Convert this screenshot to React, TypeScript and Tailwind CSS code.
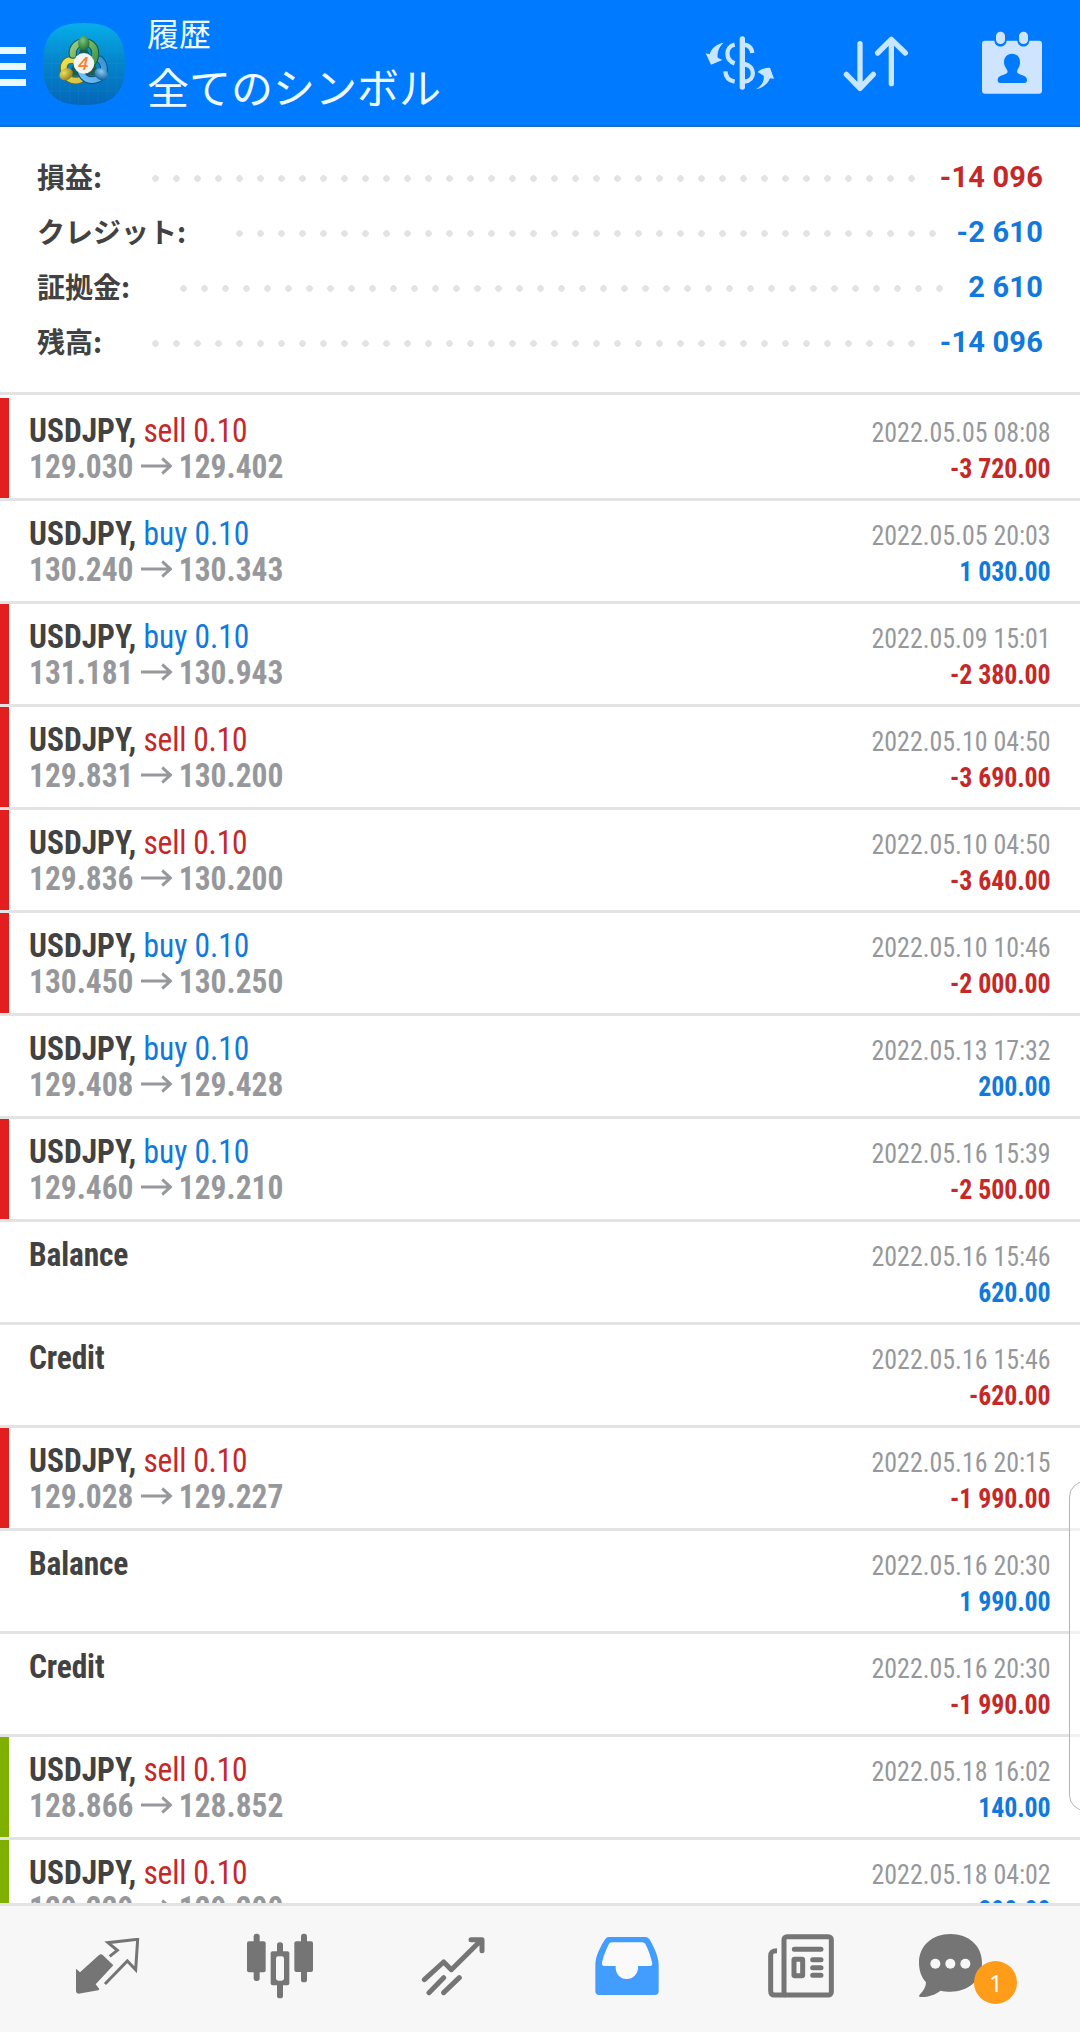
import React from "react";

type Row = {
  side?: "sell" | "buy";
  label?: string;
  from?: string;
  to?: string;
  time: string;
  profit: string;
  bar?: "red" | "green";
};

const rows: Row[] = [
  { side: "sell", from: "129.030", to: "129.402", time: "2022.05.05 08:08", profit: "-3 720.00", bar: "red" },
  { side: "buy", from: "130.240", to: "130.343", time: "2022.05.05 20:03", profit: "1 030.00" },
  { side: "buy", from: "131.181", to: "130.943", time: "2022.05.09 15:01", profit: "-2 380.00", bar: "red" },
  { side: "sell", from: "129.831", to: "130.200", time: "2022.05.10 04:50", profit: "-3 690.00", bar: "red" },
  { side: "sell", from: "129.836", to: "130.200", time: "2022.05.10 04:50", profit: "-3 640.00", bar: "red" },
  { side: "buy", from: "130.450", to: "130.250", time: "2022.05.10 10:46", profit: "-2 000.00", bar: "red" },
  { side: "buy", from: "129.408", to: "129.428", time: "2022.05.13 17:32", profit: "200.00" },
  { side: "buy", from: "129.460", to: "129.210", time: "2022.05.16 15:39", profit: "-2 500.00", bar: "red" },
  { label: "Balance", time: "2022.05.16 15:46", profit: "620.00" },
  { label: "Credit", time: "2022.05.16 15:46", profit: "-620.00" },
  { side: "sell", from: "129.028", to: "129.227", time: "2022.05.16 20:15", profit: "-1 990.00", bar: "red" },
  { label: "Balance", time: "2022.05.16 20:30", profit: "1 990.00" },
  { label: "Credit", time: "2022.05.16 20:30", profit: "-1 990.00" },
  { side: "sell", from: "128.866", to: "128.852", time: "2022.05.18 16:02", profit: "140.00", bar: "green" },
  { side: "sell", from: "129.229", to: "129.200", time: "2022.05.18 04:02", profit: "290.00", bar: "green" },
];

const summary = [
  { label: "損益:", value: "-14 096", color: "text-[#c62828]", dots: "left-[108px] w-[777px]" },
  { label: "クレジット:", value: "-2 610", color: "text-[#1279dc]", dots: "left-[192px] w-[714px]" },
  { label: "証拠金:", value: "2 610", color: "text-[#1279dc]", dots: "left-[136px] w-[777px]" },
  { label: "残高:", value: "-14 096", color: "text-[#1279dc]", dots: "left-[108px] w-[777px]" },
];

function Logo() {
  return (
    <svg className="ml-[17px] mt-[3px] h-[82px] w-[82px]" viewBox="130 69 245 245">
      <defs>
        <linearGradient id="sky" x1="0" y1="0" x2="0" y2="1">
          <stop offset="0" stopColor="#06aeea" />
          <stop offset="0.45" stopColor="#0587cc" />
          <stop offset="1" stopColor="#0466b8" />
        </linearGradient>
        <linearGradient id="green" gradientUnits="userSpaceOnUse" x1="210" y1="120" x2="290" y2="200">
          <stop offset="0" stopColor="#a5d488" />
          <stop offset="1" stopColor="#2f8f45" />
        </linearGradient>
        <linearGradient id="yellow" gradientUnits="userSpaceOnUse" x1="185" y1="165" x2="240" y2="250">
          <stop offset="0" stopColor="#f1e45a" />
          <stop offset="1" stopColor="#d8c43c" />
        </linearGradient>
        <linearGradient id="blue" gradientUnits="userSpaceOnUse" x1="320" y1="180" x2="240" y2="250">
          <stop offset="0" stopColor="#3690d2" />
          <stop offset="1" stopColor="#7acaf5" />
        </linearGradient>
        <radialGradient id="gHead" cx="0.4" cy="0.3" r="0.7">
          <stop offset="0" stopColor="#7cc67c" />
          <stop offset="1" stopColor="#1f6d33" />
        </radialGradient>
        <radialGradient id="yHead" cx="0.4" cy="0.3" r="0.7">
          <stop offset="0" stopColor="#ecdf60" />
          <stop offset="1" stopColor="#94801c" />
        </radialGradient>
        <radialGradient id="bHead" cx="0.4" cy="0.3" r="0.7">
          <stop offset="0" stopColor="#86cdf5" />
          <stop offset="1" stopColor="#17619e" />
        </radialGradient>
      </defs>
      <path
        d="M252 69C340 69 375 104 375 191.500S340 314 252 314S130 279 130 191.500S164 69 252 69Z"
        fill="url(#sky)"
      />
      <path d="M155 95V290M182 78V305M209 72V312M236 70V313M265 70V313M294 72V312M322 78V305M349 95V290M140 117H364M133 153H371M131 190H374M133 232H371M140 272H364" stroke="#35b0e8" strokeOpacity="0.16" strokeWidth="2" fill="none" />
      <path d="M252 128L205 225H300Z" fill="#1c5f50" />
      <g fill="none" strokeLinecap="round">
        <path d="M218 180C200 178 190 190 192 208C194 232 218 248 242 238" stroke="#5c6a24" strokeWidth="23" />
        <path d="M218 180C200 178 190 190 192 208C194 232 218 248 242 238" stroke="url(#yellow)" strokeWidth="17" />
        <path d="M300 178C318 196 318 230 288 238C264 244 250 232 244 218" stroke="#0c4f87" strokeWidth="23" />
        <path d="M300 178C318 196 318 230 288 238C264 244 250 232 244 218" stroke="url(#blue)" strokeWidth="17" />
        <path d="M219 164C213 118 286 112 286 160C286 178 280 186 272 194" stroke="#1b5b3c" strokeWidth="24" />
        <path d="M219 164C213 118 286 112 286 160C286 178 280 186 272 194" stroke="url(#green)" strokeWidth="18" />
      </g>
      <ellipse cx="252" cy="130" rx="17" ry="22" fill="url(#gHead)" />
      <ellipse cx="199" cy="222" rx="21" ry="17" fill="url(#yHead)" transform="rotate(-30 199 222)" />
      <ellipse cx="304" cy="222" rx="21" ry="17" fill="url(#bHead)" transform="rotate(30 304 222)" />
      <circle cx="252" cy="190" r="31" fill="#f4f4f2" />
      <text x="250" y="209" textAnchor="middle" fontFamily="Open Sans, sans-serif" fontSize="54" fontWeight="600" fontStyle="italic" fill="#f58233">4</text>
    </svg>
  );
}

function CurrencyIcon() {
  return (
    <svg className="h-[54px] w-[70px]" viewBox="76 106 210 162" fill="none">
      <g stroke="#c8e6ff" strokeWidth="13">
        <path d="M188 115V259" strokeWidth="16" strokeLinecap="round" />
        <path d="M165 132C136 138 136 178 165 188" />
        <path d="M137 212C138 230 148 240 165 243" />
        <path d="M194 132C208 134 216 142 218 157" />
        <path d="M194 190C228 196 228 240 194 243" />
      </g>
      <path d="M132 126C112 129 94 143 90 161L78 158L94 192L128 178L114 171C112 155 118 138 132 126Z" fill="#c8e6ff" />
      <path d="M229 266C247 254 254 242 252 225L234 214C246 203 260 201 271 201L283 234L271 233C266 249 249 262 229 266Z" fill="#c8e6ff" />
    </svg>
  );
}

function SortIcon() {
  return (
    <svg className="h-[56px] w-[66px]" viewBox="490 107 198 168" fill="none" stroke="#c8e6ff" strokeWidth="16" strokeLinecap="round" strokeLinejoin="round">
      <path d="M541 130V264M500 222L541 264L581 222" />
      <path d="M635 250V117M594 158L635 117L677 158" />
    </svg>
  );
}

function CalendarIcon() {
  return (
    <svg className="h-[64px] w-[62px]" viewBox="903 94 186 192">
      <path d="M915 123H943C945 146 978 146 980 123H1012C1014 146 1047 146 1048 123H1077Q1086 123 1086 132V273Q1086 282 1077 282H915Q906 282 906 273V132Q906 123 915 123Z" fill="#cfe4ff" />
      <rect x="948" y="96" width="27" height="37" rx="13" fill="#cfe4ff" />
      <rect x="1017" y="96" width="27" height="37" rx="13" fill="#cfe4ff" />
      <path d="M996 162C1012 162 1021 174 1020 190C1019 203 1012 207 1011 218C1016 228 1040 224 1041 241Q1041 250 1033 250H961Q953 250 953 241C954 224 977 228 983 218C983 207 973 203 972 190C971 174 980 162 996 162Z" fill="#007aff" />
    </svg>
  );
}

function TradeIcon() {
  return (
    <svg className="h-[56px] w-[65px]" viewBox="226 298 195 168">
      <path d="M229 390L241 401L299 348Q305 345 310 350L341 380L288 437L299 451L296 455L236 465Q229 464 229 458Z" fill="#757575" />
      <path d="M330 353L353 335L325 312L414 302L408 393L383 367L316 436" fill="none" stroke="#757575" strokeWidth="9" />
    </svg>
  );
}

function CandlesIcon() {
  return (
    <svg className="h-[66px] w-[68px]" viewBox="738 281 204 198" fill="#757575">
      <rect x="761" y="283" width="18" height="142" rx="8" />
      <rect x="741" y="306" width="56" height="93" rx="6" />
      <rect x="903" y="283" width="18" height="146" rx="8" />
      <rect x="883" y="306" width="56" height="92" rx="6" />
      <rect x="831" y="309" width="18" height="168" rx="8" />
      <rect x="812" y="336" width="56" height="102" rx="6" />
      <rect x="828" y="351" width="24" height="73" rx="7" fill="#f7f7f7" />
    </svg>
  );
}

function TrendIcon() {
  return (
    <svg className="h-[60px] w-[66px]" viewBox="183 288 198 180" fill="none" stroke="#757575" strokeWidth="15" strokeLinecap="round" strokeLinejoin="round">
      <path d="M193 419L251 366L274 389L364 300M333 299H366V332" />
      <path d="M207 458L251 413M251 458L298 413" />
    </svg>
  );
}

function InboxIcon() {
  return (
    <svg className="h-[60px] w-[66px]" viewBox="702 288 198 180">
      <path d="M748 291H855C864 291 868 296 872 304C885 328 896 352 896 376V453Q896 465 884 465H718Q706 465 706 453V376C706 352 717 328 732 303C736 296 740 291 748 291Z" fill="#429dff" />
      <path d="M757 307C751 307 748 309 745 315C738 329 730 350 726 367C725 375 727 378 733 378H767V384C768 402 780 417 800 417S833 402 834 384V378H870C876 378 878 375 876 367C872 350 866 332 858 316C855 309 851 307 846 307Z" fill="#fafafa" />
    </svg>
  );
}

function NewsIcon() {
  return (
    <svg className="h-[66px] w-[68px]" viewBox="143 279 204 198" fill="none" stroke="#757575" strokeWidth="15">
      <rect x="194" y="290" width="142" height="175" rx="9" />
      <path d="M173 332C159 332 154 336 154 348V452Q154 465 166 465H200" />
      <path d="M225 328H305M280 359H305M280 383H305M280 406H305" strokeLinecap="round" />
      <rect x="224" y="358" width="26" height="49" rx="2" />
    </svg>
  );
}

function ChatIcon() {
  return (
    <svg className="h-[66px] w-[66px]" viewBox="596 280 198 198">
      <path d="M693 283C748 283 788 318 788 369S748 456 693 456C682 456 673 455 664 453C648 465 627 473 602 472C598 471 599 467 602 464C613 453 620 441 620 428C606 412 599 392 599 369C599 318 639 283 693 283Z" fill="#757575" />
      <circle cx="648" cy="372" r="15" fill="#f7f7f7" />
      <circle cx="693" cy="372" r="15" fill="#f7f7f7" />
      <circle cx="738" cy="372" r="15" fill="#f7f7f7" />
    </svg>
  );
}

function Arrow() {
  return (
    <svg className="ml-[8px] mr-[7px] h-[18px] w-[34px]" viewBox="0 0 34 18" fill="none" stroke="#96989b" strokeWidth="3">
      <path d="M0 9H32M23 1.500L32 9L23 16.500" />
    </svg>
  );
}

function HistoryRow({ row }: { row: Row }) {
  const barColor = row.bar === "red" ? "bg-[#e31e1e]" : row.bar === "green" ? "bg-[#7fb000]" : "bg-transparent";
  return (
    <div className="flex h-[103px] shrink-0 border-b-[3px] border-[#e3e3e3]">
      <div className={`w-[8.5px] shrink-0 ${barColor}`} />
      <div className="flex flex-1 justify-between pl-[20.5px] pr-[29px] pt-[14px]">
        <div className="origin-left scale-x-[0.925] text-[34px] leading-[36px]">
          <div className="flex h-9 whitespace-pre font-bold text-[#424242]">
            {row.label ? (
              <span className="tracking-[-0.15px]">{row.label}</span>
            ) : (
              <>
                <span>USDJPY, </span>
                <span className={row.side === "sell" ? "font-normal tracking-[-0.2px] text-[#c62828]" : "font-normal text-[#1279dc]"}>{row.side} 0.10</span>
              </>
            )}
          </div>
          {row.from && (
            <div className="flex h-9 items-center font-bold text-[#96989b]">
              <span>{row.from}</span>
              <Arrow />
              <span>{row.to}</span>
            </div>
          )}
        </div>
        <div className="origin-right scale-x-[0.925] pt-[3px] text-right text-[28px] leading-[36px]">
          <div className="text-[#96989b]">{row.time}</div>
          <div className={row.profit.startsWith("-") ? "font-bold tracking-[-0.1px] text-[#c62828]" : "font-bold tracking-[-0.1px] text-[#1279dc]"}>{row.profit}</div>
        </div>
      </div>
    </div>
  );
}

export default function App() {
  return (
    <div className="relative flex h-[2032px] w-[1080px] flex-col overflow-hidden bg-white">
      <header className="flex h-[127px] shrink-0 items-center border-b-2 border-[#1a6ec0] bg-[#007aff]">
        <div className="mt-[7px] flex w-[26px] flex-col gap-[9px]">
          <div className="h-[7px] bg-[#e9f8ff]" />
          <div className="h-[7px] bg-[#e9f8ff]" />
          <div className="h-[7px] bg-[#e9f8ff]" />
        </div>
        <Logo />
        <div className="ml-[22px] flex-1 font-['Noto_Sans_CJK_JP',sans-serif] text-[#eefaff]">
          <div className="-mt-[2px] text-[32px] leading-[46px]">履歴</div>
          <div className="pt-[3px] text-[42px] leading-[56px]">全てのシンボル</div>
        </div>
        <div className="flex items-center pr-[37px]">
          <CurrencyIcon />
          <div className="ml-[68px] pt-[2px]"><SortIcon /></div>
          <div className="ml-[72px]"><CalendarIcon /></div>
        </div>
      </header>

      <section className="flex h-[268px] shrink-0 flex-col border-b-[3px] border-[#e3e3e3] pl-[37px] pr-[37px] pt-[23px]">
        {summary.map((s) => (
          <div key={s.label} className="relative flex h-[55px] items-center justify-between">
            <span className="pb-[3px] font-['Noto_Sans_CJK_JP',sans-serif] text-[28px] font-bold text-[#424242]">{s.label}</span>
            <span className={`absolute top-[18px] h-[21px] bg-[radial-gradient(circle,#e3e3e3_3px,transparent_3.6px)] bg-[length:21px_21px] ${s.dots}`} />
            <span className={`font-['Roboto',sans-serif] text-[29px] font-bold tracking-[0.2px] ${s.color}`}>{s.value}</span>
          </div>
        ))}
      </section>

      <main className="flex min-h-0 flex-1 flex-col overflow-hidden pt-[3px] font-['Roboto_Condensed','Roboto',sans-serif] [font-stretch:75%]">
        {rows.map((r, i) => (
          <HistoryRow key={i} row={r} />
        ))}
      </main>

      <nav className="grid h-[129px] shrink-0 grid-cols-6 border-t-[3px] border-[#e3e3e3] bg-[#f7f7f7] px-5 pb-[6px]">
        <div className="flex items-center justify-center pl-[2px]"><TradeIcon /></div>
        <div className="flex items-center justify-center"><CandlesIcon /></div>
        <div className="flex items-center justify-center pl-[2px]"><TrendIcon /></div>
        <div className="flex items-center justify-center"><InboxIcon /></div>
        <div className="flex items-center justify-center pl-[3px]"><NewsIcon /></div>
        <div className="flex items-center justify-center">
          <div className="relative mr-[44px]">
            <ChatIcon />
            <span className="absolute left-[56px] top-[28px] flex h-[43px] w-[43px] items-center justify-center rounded-full bg-[#ff9c1a] font-['Noto_Sans',sans-serif] text-[24px] text-white">1</span>
          </div>
        </div>
      </nav>

      <div className="absolute left-[1069px] top-[1481px] h-[330px] w-[40px] rounded-[16px] border border-[#b4b4b4] bg-white/50" />
    </div>
  );
}
